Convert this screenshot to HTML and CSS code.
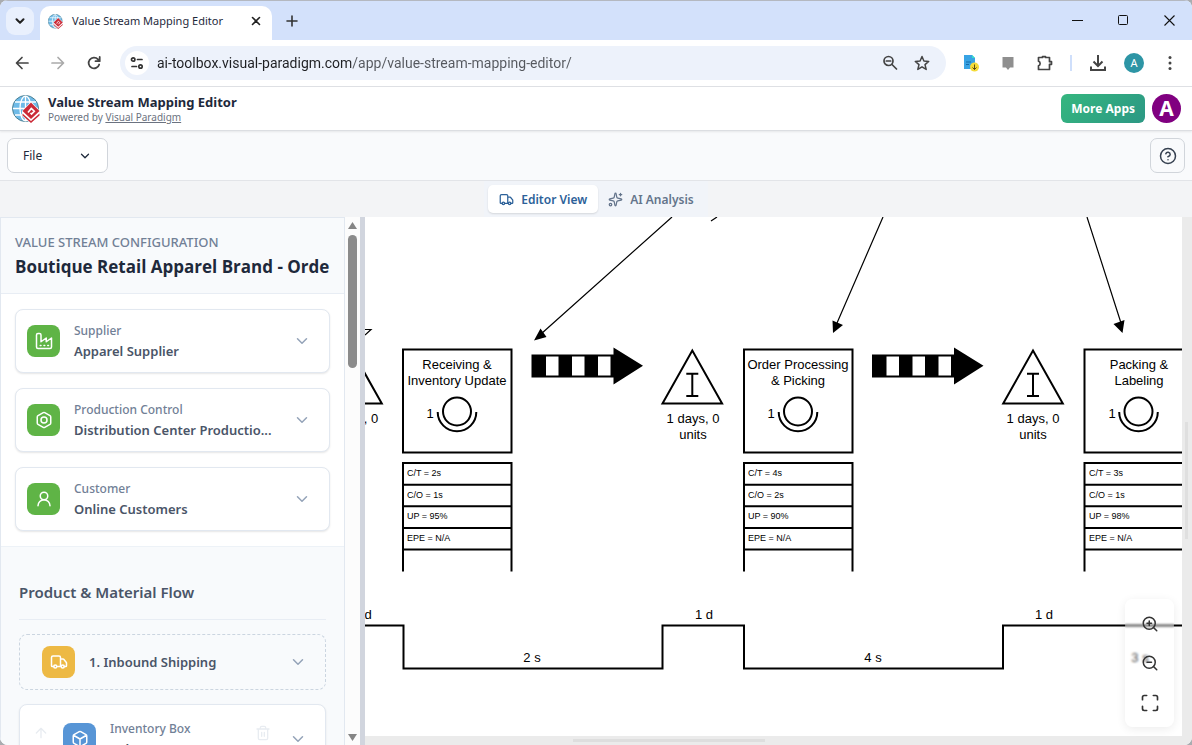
FILE: index.html
```html
<!DOCTYPE html>
<html lang="en">
<head>
  <meta charset="UTF-8">
  <title>Value Stream Mapping Editor</title>
  <link rel="stylesheet" href="styles.css">
</head>
<body>
  <svg class="sprite" width="0" height="0" aria-hidden="true">
    <symbol id="logo" viewBox="0 0 28 28">
      <circle cx="13.5" cy="13.5" r="13" fill="#6fbbe8" stroke="#4b7f92" stroke-width="1"/>
      <g fill="none" stroke="#fff" stroke-width="1.3">
        <ellipse cx="13.5" cy="13.5" rx="5.5" ry="12.3"/>
        <path d="M13.5 1v25M1 13.5h25M3 7h21M3 20h21"/>
      </g>
      <path d="M19 6.500l9 9.500V21l-9 7.500L10 21v-5z" fill="#fff"/>
      <path d="M19 7.500l8.500 8.500-8.500 8-8.500-8z" fill="#cb2a37"/>
      <path d="M10.500 18.500l8.500 7.500 8.500-7.500v2L19 28l-8.500-7.500z" fill="#cb2a37"/>
      <path d="M16 17.500l3.300-4 3 2.700-2.800 2.800-1-1" fill="none" stroke="#fff" stroke-width="1.600"/>
    </symbol>
    <symbol id="chevron" viewBox="0 0 24 24"><path d="m6 9 6 6 6-6"/></symbol>
    <symbol id="truck" viewBox="0 0 24 24">
      <path d="M14 18V6a2 2 0 0 0-2-2H4a2 2 0 0 0-2 2v11a1 1 0 0 0 1 1h2M15 18H9M19 18h2a1 1 0 0 0 1-1v-3.650a1 1 0 0 0-.220-.624l-3.480-4.350A1 1 0 0 0 17.520 8H14"/>
      <circle cx="17" cy="18" r="2"/><circle cx="7" cy="18" r="2"/>
    </symbol>
  </svg>

  <div class="window">
    <div class="tabstrip">
      <button class="tab-search" aria-label="Search tabs"><svg class="icon" width="14" height="14" stroke-width="3.500"><use href="#chevron"/></svg></button>
      <div class="tab">
        <svg width="15" height="15"><use href="#logo"/></svg>
        <span class="tab-title">Value Stream Mapping Editor</span>
        <button class="tab-close" aria-label="Close tab"><svg class="icon" width="10" height="10" viewBox="0 0 10 10" stroke-width="1.600"><path d="M1.500 1.500l7 7M8.500 1.500l-7 7"/></svg></button>
      </div>
      <button class="new-tab" aria-label="New tab"><svg class="icon" width="12" height="12" viewBox="0 0 12 12" stroke-width="1.600"><path d="M6 1v10M1 6h10"/></svg></button>
      <div class="win-controls">
        <button aria-label="Minimize"><svg width="11" height="11" fill="none" stroke="#111"><path d="M0 5.500h11"/></svg></button>
        <button aria-label="Maximize"><svg width="11" height="11" fill="none" stroke="#111"><rect x=".5" y=".5" width="9" height="9" rx="1"/></svg></button>
        <button aria-label="Close"><svg width="11" height="11" fill="none" stroke="#111" stroke-width="1.100"><path d="M.5.5l10 10M10.500.5l-10 10"/></svg></button>
      </div>
    </div>

    <div class="navbar">
      <button class="nav-btn" aria-label="Back"><svg class="icon" width="16" height="16" viewBox="0 0 16 16" stroke-width="1.700"><path d="M14 8H3M8 2.500L2.500 8 8 13.500"/></svg></button>
      <button class="nav-btn disabled" aria-label="Forward"><svg class="icon" width="16" height="16" viewBox="0 0 16 16" stroke-width="1.700"><path d="M2 8h11M8 2.500L13.500 8 8 13.500"/></svg></button>
      <button class="nav-btn" aria-label="Reload"><svg class="icon" width="16" height="16" viewBox="0 0 16 16" stroke-width="1.800"><path d="M13.200 9.500A5.400 5.400 0 1 1 12 4.300l1.500 1.700M13.700 2v4.200H9.500"/></svg></button>
      <div class="omnibox">
        <button class="site-info" aria-label="Site information"><svg class="icon" width="14" height="14" viewBox="0 0 14 14" stroke-width="1.700"><circle cx="3.200" cy="3.500" r="1.700"/><path d="M7.500 3.500h4.500M2 10.500h4.500"/><circle cx="10.500" cy="10.500" r="1.700"/></svg></button>
        <input class="url" type="text" aria-label="Address" value="ai-toolbox.visual-paradigm.com/app/value-stream-mapping-editor/">
        <button class="omni-btn" aria-label="Zoom"><svg class="icon" width="16" height="16" viewBox="0 0 16 16" stroke-width="1.700"><circle cx="6.500" cy="6" r="4.500"/><path d="M10 9.500l4.500 4.500M4.300 6h4.400"/></svg></button>
        <button class="omni-btn" aria-label="Bookmark"><svg class="icon" width="16" height="16" viewBox="0 0 16 16" stroke-width="1.500"><path d="M8 1.500l1.900 4.500 4.800.4-3.700 3.200 1.200 4.800L8 11.800l-4.200 2.600L5 9.600 1.300 6.400 6.100 6z"/></svg></button>
      </div>
      <div class="extensions">
        <button class="nav-btn" aria-label="Save document"><svg width="16" height="18" viewBox="0 0 16 18"><path d="M1 1h8l3 3v11H1z" fill="#38a3e4"/><path d="M9 1l3 3H9z" fill="#35e0c5"/><path d="M3 8h5M3 10.500h3" stroke="#156aa8"/><circle cx="11.500" cy="13" r="4.500" fill="#f5dc3a"/><path d="M11.500 10.500v5M9.500 13.500l2 2 2-2" fill="none" stroke="#5a4a12"/></svg></button>
        <button class="nav-btn" aria-label="Notes"><svg width="12" height="16" viewBox="0 0 12 16"><path d="M.5 2h11v10.500H8l-2 2.500-2-2.500H.5z" fill="#8f8f8f"/></svg></button>
        <button class="nav-btn" aria-label="Extensions"><svg class="icon" width="18" height="18" viewBox="0 0 18 18" stroke-width="1.700"><path d="M2.500 3.500h4V2.600h3v.9h4v4.200h2v2.600h-2v5.200h-11v-3.800a2.300 2.300 0 0 0 0-4.400z"/></svg></button>
      </div>
      <span class="nav-divider"></span>
      <button class="nav-btn" aria-label="Downloads"><svg class="icon square" width="18" height="18" viewBox="0 0 18 18" stroke-width="2"><path d="M9 1v10.500M4.500 7.500L9 12l4.500-4.500M2 12.500V16h14v-3.500"/></svg></button>
      <button class="nav-btn" aria-label="Profile"><span class="profile">A</span></button>
      <button class="nav-btn" aria-label="Menu"><svg width="4" height="16" fill="#444"><circle cx="2" cy="2.500" r="1.500"/><circle cx="2" cy="8" r="1.500"/><circle cx="2" cy="13.500" r="1.500"/></svg></button>
    </div>

    <header class="app-header">
      <svg width="28" height="28"><use href="#logo"/></svg>
      <div class="brand">
        <div class="brand-title">Value Stream Mapping Editor</div>
        <div class="brand-sub">Powered by <a href="#">Visual Paradigm</a></div>
      </div>
      <button class="more-apps">More Apps</button>
      <button class="user" aria-label="Account">A</button>
    </header>

    <div class="toolbar">
      <button class="file-btn">File <svg class="icon" width="14" height="14" stroke-width="2.200"><use href="#chevron"/></svg></button>
      <button class="help-btn" aria-label="Help"><svg class="icon" width="18" height="18" viewBox="0 0 24 24" stroke-width="2"><circle cx="12" cy="12" r="10"/><path d="M9.090 9a3 3 0 0 1 5.830 1c0 2-3 3-3 3M12 17h.01"/></svg></button>
    </div>

    <nav class="views">
      <div class="view-group">
        <button class="view active"><svg class="icon" width="15" height="15" stroke-width="2"><use href="#truck"/></svg>Editor View</button>
        <button class="view"><svg class="icon" width="15" height="15" viewBox="0 0 24 24" stroke-width="2"><path d="M11.017 2.814a1 1 0 0 1 1.966 0l1.051 5.558a2 2 0 0 0 1.594 1.594l5.558 1.051a1 1 0 0 1 0 1.966l-5.558 1.051a2 2 0 0 0-1.594 1.594l-1.051 5.558a1 1 0 0 1-1.966 0l-1.051-5.558a2 2 0 0 0-1.594-1.594l-5.558-1.051a1 1 0 0 1 0-1.966l5.558-1.051a2 2 0 0 0 1.594-1.594zM20 2v4M22 4h-4"/><circle cx="4" cy="20" r="2"/></svg>AI Analysis</button>
      </div>
    </nav>

    <main class="workspace">
      <aside class="sidebar">
        <div class="config-head">
          <label class="config-label" for="mapName">VALUE STREAM CONFIGURATION</label>
          <input class="config-name" id="mapName" type="text" value="Boutique Retail Apparel Brand - Order">
        </div>

        <div class="entities">
          <div class="card">
            <span class="badge green"><svg class="icon" width="18" height="18" viewBox="0 0 24 24" stroke-width="2"><path d="M2 20a2 2 0 0 0 2 2h16a2 2 0 0 0 2-2V8l-7 5V8l-7 5V4a2 2 0 0 0-2-2H4a2 2 0 0 0-2 2ZM17 18h1M12 18h1M7 18h1"/></svg></span>
            <div class="card-text"><div class="kind">Supplier</div><div class="name">Apparel Supplier</div></div>
            <button class="expand" aria-label="Expand supplier"><svg class="icon" width="18" height="18" stroke-width="2"><use href="#chevron"/></svg></button>
          </div>
          <div class="card">
            <span class="badge green"><svg class="icon" width="18" height="18" viewBox="0 0 24 24" stroke-width="2"><path d="M21 16V8a2 2 0 0 0-1-1.730l-7-4a2 2 0 0 0-2 0l-7 4A2 2 0 0 0 3 8v8a2 2 0 0 0 1 1.730l7 4a2 2 0 0 0 2 0l7-4A2 2 0 0 0 21 16z"/><circle cx="12" cy="12" r="4"/></svg></span>
            <div class="card-text"><div class="kind">Production Control</div><div class="name">Distribution Center Productio...</div></div>
            <button class="expand" aria-label="Expand production control"><svg class="icon" width="18" height="18" stroke-width="2"><use href="#chevron"/></svg></button>
          </div>
          <div class="card">
            <span class="badge green"><svg class="icon" width="18" height="18" viewBox="0 0 24 24" stroke-width="2"><circle cx="12" cy="8" r="5"/><path d="M20 21a8 8 0 0 0-16 0"/></svg></span>
            <div class="card-text"><div class="kind">Customer</div><div class="name">Online Customers</div></div>
            <button class="expand" aria-label="Expand customer"><svg class="icon" width="18" height="18" stroke-width="2"><use href="#chevron"/></svg></button>
          </div>
        </div>

        <section class="flow">
          <h2>Product &amp; Material Flow</h2>
          <div class="shipping">
            <span class="badge amber"><svg class="icon" width="18" height="18" stroke-width="2"><use href="#truck"/></svg></span>
            <div class="card-text"><div class="name">1. Inbound Shipping</div></div>
            <button class="expand" aria-label="Expand shipping"><svg class="icon" width="18" height="18" stroke-width="2"><use href="#chevron"/></svg></button>
          </div>
          <div class="card step">
            <button class="faint" aria-label="Move up"><svg class="icon" width="16" height="16" viewBox="0 0 24 24" stroke-width="2"><path d="m5 12 7-7 7 7M12 19V5"/></svg></button>
            <span class="badge blue"><svg class="icon" width="18" height="18" viewBox="0 0 24 24" stroke-width="2"><path d="M21 8a2 2 0 0 0-1-1.730l-7-4a2 2 0 0 0-2 0l-7 4A2 2 0 0 0 3 8v8a2 2 0 0 0 1 1.730l7 4a2 2 0 0 0 2 0l7-4A2 2 0 0 0 21 16ZM3.300 7l8.700 5 8.700-5M12 22V12"/></svg></span>
            <div class="card-text"><div class="kind">Inventory Box</div><div class="name">Subsequent B</div></div>
            <button class="faint" aria-label="Delete"><svg class="icon" width="16" height="16" viewBox="0 0 24 24" stroke-width="2"><path d="M3 6h18M19 6v14a2 2 0 0 1-2 2H7a2 2 0 0 1-2-2V6M8 6V4a2 2 0 0 1 2-2h4a2 2 0 0 1 2 2v2M10 11v6M14 11v6"/></svg></button>
            <button class="expand" aria-label="Expand inventory"><svg class="icon" width="18" height="18" stroke-width="2"><use href="#chevron"/></svg></button>
          </div>
        </section>
      </aside>

      <div class="scrollbar">
        <svg width="9" height="8"><path d="M4.500 1L9 8H0z" fill="#858585"/></svg>
        <div class="thumb"></div>
        <svg width="9" height="8"><path d="M4.500 7L9 0H0z" fill="#858585"/></svg>
      </div>
      <div class="splitter"></div>

      <div class="canvas-pane">
        <div class="canvas">
          <svg class="diagram" width="100%" height="100%">
            <defs>
              <!-- process box, operator, data table -->
              <g id="process" fill="none" stroke="#000" stroke-width="2">
                <rect x="0" y="0" width="108.500" height="103"/>
                <circle cx="54" cy="62" r="14"/>
                <path d="M34.700 62.500a19.300 19.300 0 0 0 38.600 0"/>
                <path d="M0 222V113.500h108.500V222M0 135.200h108.500M0 156.800h108.500M0 178.400h108.500M0 200h108.500"/>
              </g>
              <!-- inventory triangle -->
              <g id="inventory" fill="none" stroke="#000" stroke-width="2">
                <path d="M-29.800 54L0 1l29.800 53z"/>
                <path d="M-6 24.200H6M0 24.200v22.300M-6 46.500H6"/>
              </g>
              <!-- push arrow -->
              <g id="push">
                <path d="M0 6.500h82V-.5L111.500 17.800 82 36.500v-7H0z"/>
                <path d="M14.500 8.500h12.500v19H14.500zM40.500 8.500h12.500v19H40.500zM66.500 8.500h12.500v19H66.500z" fill="#fff"/>
              </g>
            </defs>

            <use href="#inventory" x="-13" y="132.500"/>
            <use href="#process" x="38" y="132.500"/>
            <use href="#push" x="166.500" y="131"/>
            <use href="#inventory" x="327.300" y="132.500"/>
            <use href="#process" x="379" y="132.500"/>
            <use href="#push" x="507" y="131"/>
            <use href="#inventory" x="668" y="132.500"/>
            <use href="#process" x="719.500" y="132.500"/>

            <g stroke="#000" stroke-width="1.200">
              <path d="M307 0L176 117M518 0l-46 106M722 0l34 106M352 0l-6 4M0 112.500h6L0 118" fill="none"/>
              <path d="M169 123.500l6.500-12 6 8.500zM468 116l-.5-12.500 10.500 4.500zM757.500 116l-9-9 11-4z" stroke="none"/>
            </g>

            <g class="label" text-anchor="middle">
              <text x="6" y="206">, 0</text>
              <text x="92" y="152">Receiving &amp;</text><text x="92" y="168">Inventory Update</text><text x="65" y="201">1</text>
              <text x="328" y="206">1 days, 0</text><text x="328" y="222">units</text>
              <text x="433" y="152">Order Processing</text><text x="433" y="168">&amp; Picking</text><text x="406" y="201">1</text>
              <text x="668" y="206">1 days, 0</text><text x="668" y="222">units</text>
              <text x="774" y="152">Packing &amp;</text><text x="774" y="168">Labeling</text><text x="747" y="201">1</text>
            </g>

            <g class="data">
              <text x="42" y="259">C/T = 2s</text><text x="42" y="281">C/O = 1s</text><text x="42" y="302">UP = 95%</text><text x="42" y="324">EPE = N/A</text>
              <text x="383" y="259">C/T = 4s</text><text x="383" y="281">C/O = 2s</text><text x="383" y="302">UP = 90%</text><text x="383" y="324">EPE = N/A</text>
              <text x="724" y="259">C/T = 3s</text><text x="724" y="281">C/O = 1s</text><text x="724" y="302">UP = 98%</text><text x="724" y="324">EPE = N/A</text>
            </g>

            <path d="M-5 408.500H38.500V451.500H297.500V408.500H379V451.500H638V408.500H900" fill="none" stroke="#000" stroke-width="2"/>
            <g class="label" text-anchor="middle">
              <text x="3" y="402">d</text><text x="167" y="445">2 s</text><text x="339" y="402">1 d</text>
              <text x="508" y="445">4 s</text><text x="679" y="402">1 d</text><text x="775" y="445">3 s</text>
            </g>
          </svg>
        </div>
        <div class="track-v"><div></div></div>
        <div class="track-h"><div></div></div>
        <div class="zoom-panel">
          <button aria-label="Zoom in"><svg class="icon" width="18" height="18" viewBox="0 0 24 24" stroke-width="2"><circle cx="11" cy="11" r="8"/><path d="m21 21-4.350-4.350M11 8v6M8 11h6"/></svg></button>
          <button aria-label="Zoom out"><svg class="icon" width="18" height="18" viewBox="0 0 24 24" stroke-width="2"><circle cx="11" cy="11" r="8"/><path d="m21 21-4.350-4.350M8 11h6"/></svg></button>
          <button aria-label="Fit to screen"><svg class="icon" width="20" height="20" viewBox="0 0 24 24" stroke-width="2"><path d="M8 3H5a2 2 0 0 0-2 2v3M21 8V5a2 2 0 0 0-2-2h-3M3 16v3a2 2 0 0 0 2 2h3M16 21h3a2 2 0 0 0 2-2v-3"/></svg></button>
        </div>
      </div>
    </main>
  </div>
</body>
</html>
```
FILE: styles.css
```css
* { box-sizing: border-box; }
body { margin: 0; height: 100vh; overflow: hidden; background: #a9acb0; font-family: "Noto Sans", "Open Sans", sans-serif; font-size: 13px; color: #1e293b; }
button { padding: 0; border: 0; background: none; font: inherit; color: inherit; display: flex; align-items: center; justify-content: center; white-space: nowrap; }
input { padding: 0; border: 0; background: none; font: inherit; color: inherit; outline: 0; min-width: 0; }
svg { display: block; flex: none; }
.sprite { position: absolute; }
.icon { fill: none; stroke: currentColor; stroke-linecap: round; stroke-linejoin: round; }
.icon.square { stroke-linecap: butt; stroke-linejoin: miter; }
.window { height: 100vh; display: flex; flex-direction: column; overflow: hidden; border-radius: 8px; background: #fff; }

/* browser */
.tabstrip { flex: none; height: 40px; display: flex; align-items: center; border-top: 1px solid #b4b8c0; background: #d3e1fb; padding-left: 6px; }
.tab-search { width: 28px; height: 28px; border-radius: 9px; background: #e9f0fd; color: #222; }
.tab { align-self: flex-end; display: flex; align-items: center; width: 232px; height: 34px; margin-left: 6px; padding: 0 9px 4px 8px; border-radius: 10px 10px 0 0; background: #fff; }
.tab-title { flex: 1; margin-left: 9px; font-size: 11px; line-height: 18px; white-space: nowrap; }
.tab-close { width: 14px; height: 14px; color: #222; }
.new-tab { width: 40px; height: 28px; color: #333; }
.win-controls { display: flex; margin-left: auto; }
.win-controls button { width: 46px; height: 38px; }

.navbar { flex: none; display: flex; align-items: center; height: 47px; padding: 0 4px; border-bottom: 1px solid #dfe1e5; }
.nav-btn { width: 36px; height: 34px; color: #444; }
.nav-btn.disabled { color: #aaa; }
.omnibox { flex: 1; display: flex; align-items: center; height: 34px; margin: 0 7px 0 8px; padding: 0 8px 0 5px; border-radius: 17px; background: #edf2fb; }
.site-info { width: 24px; height: 24px; border-radius: 50%; background: #fff; color: #333; }
/* host is darker than the path */
.url { flex: 1; margin-left: 8px; font-family: Roboto, sans-serif; font-size: 14px; line-height: 20px; color: transparent; background: linear-gradient(90deg, #1f2023 194px, #55585e 194px); -webkit-background-clip: text; background-clip: text; }
.omni-btn { width: 32px; height: 32px; color: #444; }
.extensions { display: flex; gap: 1px; }
.nav-divider { width: 2px; height: 16px; margin: 0 8px 0 7px; background: #cfdffb; }
.profile { width: 20px; height: 20px; border-radius: 50%; background: #2d95a5; color: #fff; font-size: 11px; line-height: 20px; }

/* app header */
.app-header { flex: none; position: relative; display: flex; align-items: center; height: 44px; padding: 0 11px 0 12px; border-bottom: 1px solid #dcdee2; box-shadow: 0 1px 2px rgba(0,0,0,0.08); }
.brand { flex: 1; margin-left: 8px; padding-top: 1px; }
.brand-title { font-size: 13px; font-weight: 700; line-height: 17px; }
.brand-sub { font-size: 10px; line-height: 13px; color: #6b7280; }
.brand-sub a { color: inherit; }
.more-apps { height: 29px; padding: 0 10px; border-radius: 6px; background: linear-gradient(135deg, #35b67f, #2c9884); color: #fff; font-size: 12px; font-weight: 700; }
.user { width: 29px; height: 29px; margin-left: 7px; border-radius: 50%; background: #800080; color: #fff; font-size: 21px; font-weight: 700; line-height: 29px; }

.toolbar { flex: none; display: flex; align-items: center; justify-content: space-between; height: 50px; padding: 0 7px; border-bottom: 1px solid #e2e4e8; background: #f9fafc; }
.file-btn, .help-btn { height: 35px; border: 1px solid #d1d5db; border-radius: 7px; background: #fff; }
.file-btn { width: 101px; padding: 0 15px; justify-content: space-between; font-size: 12px; }
.help-btn { width: 35px; background: #f9fafc; color: #374151; }

.views { flex: none; display: flex; justify-content: center; background: #f3f4f6; }
.view-group { display: flex; padding: 4px; background: #f1f4f9; }
.view { gap: 7px; height: 28px; padding: 0 10px; border-radius: 5px; font-size: 12px; font-weight: 600; color: #64748b; }
.view.active { padding: 0 11px; background: #fff; color: #2c6199; box-shadow: 0 1px 2px rgba(0,0,0,0.12); }

/* workspace */
.workspace { flex: 1; display: flex; min-height: 0; }
.sidebar { flex: none; width: 345px; overflow: hidden; border: 1px solid #e2e8f0; border-bottom: 0; background: #f8fafc; }
.config-head { padding: 14px 14px 12px; border-bottom: 1px solid #e8edf4; }
.config-label { display: block; font-size: 13px; font-weight: 500; line-height: 20px; color: #718096; }
.config-name { display: block; width: 100%; height: 29px; font-family: "Open Sans", sans-serif; font-size: 17px; font-weight: 700; line-height: 29px; }
.entities { display: flex; flex-direction: column; gap: 15px; padding: 15px 14px; border-bottom: 1px solid #edf2f7; background: #fff; }
.card { display: flex; align-items: center; height: 64px; padding: 0 16px 0 11px; border: 1px solid #e2e8f0; border-radius: 8px; background: #fff; box-shadow: 0 1px 2px rgba(0,0,0,0.1); }
.badge { flex: none; display: flex; align-items: center; justify-content: center; width: 33px; height: 32px; border-radius: 8px; color: #fff; }
.green { background: #5fb446; }
.amber { background: #edb944; }
.blue { background: #5795d6; }
.card-text { flex: 1; min-width: 0; margin-left: 14px; white-space: nowrap; }
.kind { font-size: 12px; font-weight: 500; line-height: 21px; color: #718096; }
.name { font-size: 13px; font-weight: 600; line-height: 21px; color: #4a5568; }
.expand { width: 22px; height: 22px; color: #94a3b8; }
.flow { padding: 33px 18px 0; }
.flow h2 { margin: 0 0 14px; padding-bottom: 14px; border-bottom: 1px solid #e8edf4; font-size: 15px; font-weight: 600; line-height: 25px; color: #4a5568; }
.shipping { display: flex; align-items: center; height: 56px; padding: 0 16px 0 22px; border: 1px dashed #cbd5e0; border-radius: 8px; }
.step { height: 70px; margin-top: 14px; padding-left: 13px; }
.step .badge { margin-left: 14px; }
.faint { width: 16px; height: 16px; margin-bottom: 12px; color: #e8ecf1; }
.faint + .expand { margin-left: 16px; }

.scrollbar { flex: none; display: flex; flex-direction: column; align-items: center; width: 15px; padding: 4px 0 3px; background: #fcfcfc; }
.thumb { width: 9px; height: 133px; margin: 6px 0 auto; border-radius: 5px; background: #8b8b8b; }
.splitter { flex: none; width: 5px; background: #d1d5de; }

.canvas-pane { flex: 1; position: relative; display: grid; grid-template: minmax(0, 1fr) 9px / minmax(0, 1fr) 10px; background: #ebebeb; }
.canvas { overflow: hidden; background: #fff; }
.track-v div { width: 3px; height: 117px; margin: 205px 0 0 3px; background: #dfdfdf; }
.track-h div { width: 192px; height: 3px; margin: 3px 0 0 208px; background: #dedede; }
.label { font-family: "Liberation Sans", Arial, sans-serif; font-size: 13px; }
.data { font-family: "Liberation Sans", Arial, sans-serif; font-size: 9px; }
.zoom-panel { position: absolute; right: 18px; bottom: 18px; display: flex; flex-direction: column; align-items: center; justify-content: space-around; width: 49px; height: 128px; padding: 6px 0 4px; border-radius: 8px; background: rgba(255,255,255,0.3); backdrop-filter: blur(1px); box-shadow: 0 2px 10px rgba(0,0,0,0.08); color: #333; }
```
